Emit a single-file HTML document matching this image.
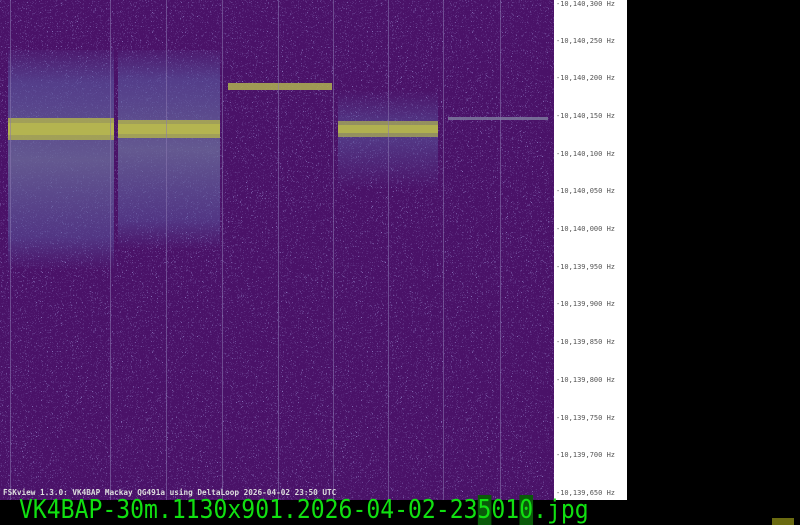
<!DOCTYPE html>
<html><head><style>
*{margin:0;padding:0}
body{width:800px;height:525px;background:#000;position:relative;overflow:hidden;font-family:"DejaVu Sans Mono","Liberation Mono",monospace}
#wf{position:absolute;left:0;top:0;width:554px;height:500px;background:#4a1268;overflow:hidden}
#wf svg{position:absolute;left:0;top:0}
.vl{position:absolute;top:0;width:1px;height:500px;background:#8a78b0;opacity:.55}
#lab{position:absolute;left:554px;top:0;width:73px;height:500px;background:#fff}
.l{position:absolute;left:2px;font-size:7px;color:#555;white-space:nowrap;font-family:"DejaVu Sans Mono",monospace}
#foot{position:absolute;left:3px;top:488px;font-size:7.7px;color:#ddd;font-weight:bold;white-space:nowrap;font-family:"DejaVu Sans Mono",monospace}
#name{position:absolute;left:19px;top:498px;font-size:25.5px;color:#11e011;white-space:nowrap;line-height:25px;font-family:"DejaVu Sans Mono",monospace;transform:scaleX(0.905);transform-origin:0 0}
</style></head><body>
<div id="wf">
<svg width="554" height="500">
<defs>
<filter id="n" filterUnits="userSpaceOnUse" x="0" y="0" width="554" height="500"><feTurbulence type="turbulence" baseFrequency="0.8" numOctaves="1" seed="3" result="t"/><feColorMatrix in="t" type="matrix" values="0 0 0 0 0.40  0 0 0 0 0.38  0 0 0 0 0.80  4 0 0 0 -1.4"/></filter>
<linearGradient id="hz" x1="0" y1="0" x2="0" y2="1">
<stop offset="0" stop-color="#5a5aa0" stop-opacity="0.1"/>
<stop offset="0.15" stop-color="#5a5aa0" stop-opacity="0.6"/>
<stop offset="0.5" stop-color="#6a6a9a" stop-opacity="0.8"/>
<stop offset="0.85" stop-color="#5a5aa0" stop-opacity="0.5"/>
<stop offset="1" stop-color="#5a5aa0" stop-opacity="0"/>
</linearGradient>
<linearGradient id="hz2" x1="0" y1="0" x2="0" y2="1">
<stop offset="0" stop-color="#5a5aa0" stop-opacity="0"/>
<stop offset="0.4" stop-color="#5a5aa0" stop-opacity="0.6"/>
<stop offset="1" stop-color="#5a5aa0" stop-opacity="0"/>
</linearGradient>
</defs>
<rect width="554" height="500" fill="#fff" filter="url(#n)"/>
<rect x="8" y="50" width="106" height="220" fill="url(#hz)"/>
<rect x="118" y="50" width="102" height="200" fill="url(#hz)"/>
<rect x="338" y="90" width="100" height="100" fill="url(#hz2)"/>
<rect x="8" y="118" width="106" height="22" fill="#a8a852" opacity=".9"/>
<rect x="118" y="120" width="102" height="18" fill="#a8a852" opacity=".9"/>
<rect x="8" y="123" width="106" height="12" fill="#b4b450"/>
<rect x="118" y="124" width="102" height="10" fill="#b4b450"/>
<rect x="228" y="83" width="104" height="7" fill="#a8a852" opacity=".9"/>
<rect x="338" y="121" width="100" height="16" fill="#a0a058" opacity=".85"/>
<rect x="338" y="125" width="100" height="8" fill="#b0b050"/>
<rect x="448" y="117" width="100" height="3" fill="#8080a0" opacity=".8"/>
</svg>
<div class="vl" style="left:10px"></div><div class="vl" style="left:110px"></div><div class="vl" style="left:166px"></div><div class="vl" style="left:222px"></div><div class="vl" style="left:278px"></div><div class="vl" style="left:333px"></div><div class="vl" style="left:388px"></div><div class="vl" style="left:443px"></div><div class="vl" style="left:500px"></div>
<div id="foot">FSKview 1.3.0: VK4BAP Mackay QG491a using DeltaLoop 2026-04-02 23:50 UTC</div>
</div>
<div id="lab">
<div class="l" style="top:0px">-10,140,300 Hz</div>
<div class="l" style="top:37px">-10,140,250 Hz</div>
<div class="l" style="top:74px">-10,140,200 Hz</div>
<div class="l" style="top:112px">-10,140,150 Hz</div>
<div class="l" style="top:150px">-10,140,100 Hz</div>
<div class="l" style="top:187px">-10,140,050 Hz</div>
<div class="l" style="top:225px">-10,140,000 Hz</div>
<div class="l" style="top:263px">-10,139,950 Hz</div>
<div class="l" style="top:300px">-10,139,900 Hz</div>
<div class="l" style="top:338px">-10,139,850 Hz</div>
<div class="l" style="top:376px">-10,139,800 Hz</div>
<div class="l" style="top:414px">-10,139,750 Hz</div>
<div class="l" style="top:451px">-10,139,700 Hz</div>
<div class="l" style="top:489px">-10,139,650 Hz</div>
</div>
<div id="name">VK4BAP-30m.1130x901.2026-04-02-23<span style="background:#0a5a0a">5</span>01<span style="background:#0a5a0a">0</span>.jpg</div>
<div style="position:absolute;left:772px;top:518px;width:22px;height:7px;background:#6a6a10"></div>
</body></html>
